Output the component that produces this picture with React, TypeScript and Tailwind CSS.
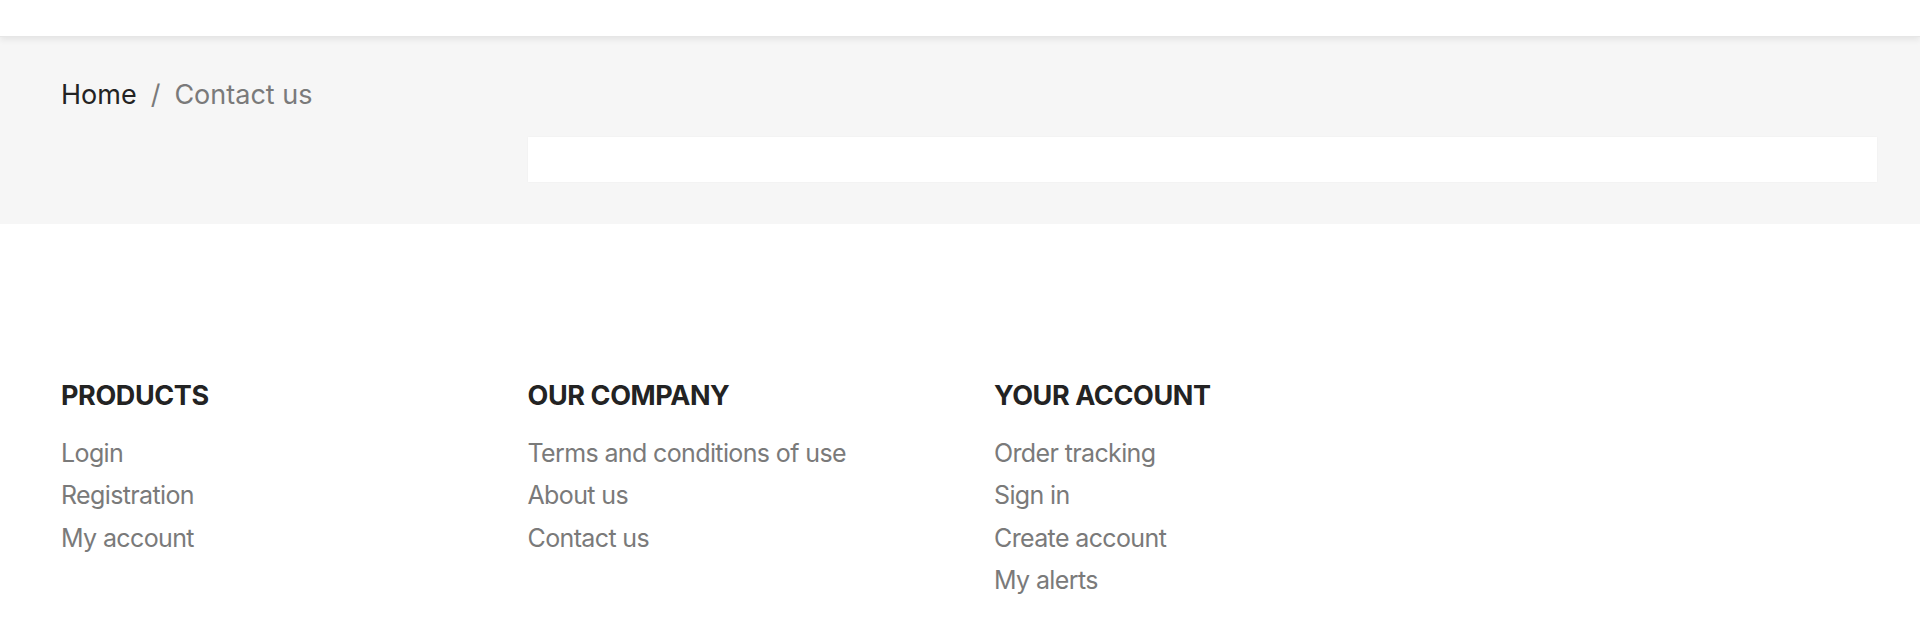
const productLinks = ["Login", "Registration", "My account"];
const companyLinks = ["Terms and conditions of use", "About us", "Contact us"];
const accountLinks = ["Order tracking", "Sign in", "Create account", "My alerts"];

function FooterColumn({ title, links }: { title: string; links: string[] }) {
  return (
    <div>
      <h4 className="text-[27px] leading-[32px] font-bold uppercase text-[#232323] tracking-[-0.015em]">{title}</h4>
      <ul className="mt-[20px]">
        {links.map((l) => (
          <li key={l} className="text-[25px] leading-[42.4px] tracking-[-0.025em] text-[#7a7a7a]">
            <a href="#">{l}</a>
          </li>
        ))}
      </ul>
    </div>
  );
}

export default function App() {
  return (
    <div className="min-h-[621px] bg-white font-['Inter',sans-serif] overflow-hidden">
      {/* header */}
      <header className="relative z-10 h-[37px] bg-white border-b border-[#e6e6e6] shadow-[0_3px_6px_rgba(0,0,0,0.07)]" />

      {/* wrapper */}
      <section className="bg-[#f6f6f6] pt-[42px] pb-[42px]">
        <div className="ml-[61px] w-[1816px]">
          <nav className="flex items-center text-[27px] leading-[32px]">
            <a href="#" className="text-[#232323]">Home</a>
            <span className="mx-[14px] text-[#7a7a7a]">/</span>
            <span className="text-[#7a7a7a]">Contact us</span>
          </nav>
          <div className="grid grid-cols-4 gap-x-[50px] mt-[26px]">
            <div className="col-span-3 col-start-2 h-[45px] bg-white shadow-[0_0_2px_rgba(0,0,0,0.04)]" />
          </div>
        </div>
      </section>

      {/* footer */}
      <footer className="pt-[156px]">
        <div className="ml-[61px] w-[1816px] grid grid-cols-4 gap-x-[50px]">
          <FooterColumn title="Products" links={productLinks} />
          <FooterColumn title="Our company" links={companyLinks} />
          <FooterColumn title="Your account" links={accountLinks} />
          <div />
        </div>
      </footer>
    </div>
  );
}
